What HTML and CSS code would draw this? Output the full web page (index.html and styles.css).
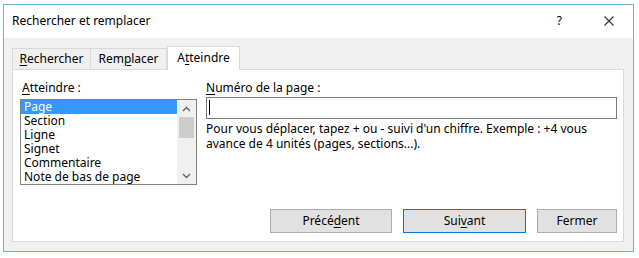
FILE: index.html
```html
<!DOCTYPE html>
<html lang="fr">
<head>
<meta charset="utf-8">
<title>Rechercher et remplacer</title>
<link rel="stylesheet" href="styles.css">
</head>
<body>
<div class="window">
  <div class="titlebar">
    <span class="title">Rechercher et remplacer</span>
    <span class="help">?</span>
    <span class="close"><svg width="10" height="10" viewBox="0 0 10 10"><path d="M0.5 0.5 L9.5 9.5 M9.5 0.5 L0.5 9.5" stroke="#333" stroke-width="1.1" fill="none"/></svg></span>
  </div>
  <div class="body">
    <div class="tabs">
      <div class="tab t1"><u>R</u>echercher</div>
      <div class="tab t2">Rem<u>p</u>lacer</div>
      <div class="tab active">A<u>t</u>teindre</div>
    </div>
    <div class="panel">
      <div class="cols">
        <div class="left">
          <div class="label lbl-left"><u>A</u>tteindre :</div>
          <div class="listbox">
            <ul class="items">
              <li class="sel">Page</li>
              <li>Section</li>
              <li>Ligne</li>
              <li>Signet</li>
              <li>Commentaire</li>
              <li>Note de bas de page</li>
            </ul>
            <div class="scrollbar">
              <div class="arrow up"><svg width="9" height="6" viewBox="0 0 9 6"><path d="M1 5 L4.5 1.5 L8 5" stroke="#606060" stroke-width="1.3" fill="none"/></svg></div>
              <div class="thumb"></div>
              <div class="track"></div>
              <div class="arrow down"><svg width="9" height="6" viewBox="0 0 9 6"><path d="M1 1 L4.5 4.5 L8 1" stroke="#606060" stroke-width="1.3" fill="none"/></svg></div>
            </div>
          </div>
        </div>
        <div class="right">
          <div class="label lbl-right"><u>N</u>uméro de la page :</div>
          <div class="input"><span class="caret"></span></div>
          <p class="desc">Pour vous déplacer, tapez + ou - suivi d'un chiffre. Exemple : +4 vous<br>avance de 4 unités (pages, sections...).</p>
        </div>
      </div>
      <div class="buttons">
        <div class="btn prev">Précé<u>d</u>ent</div>
        <div class="btn next">Sui<u>v</u>ant</div>
        <div class="btn close-btn">Fermer</div>
      </div>
    </div>
  </div>
</div>
</body>
</html>
```
FILE: styles.css
```css
* { box-sizing: border-box; }
html, body { margin: 0; padding: 0; background: #ffffff; }
body {
  font-family: "Noto Sans", "Open Sans", "DejaVu Sans", sans-serif;
  font-size: 12px;
  color: #000;
  width: 639px;
  height: 258px;
  overflow: hidden;
}
u { text-decoration: underline; text-underline-offset: 2px; text-decoration-thickness: 1px; }
.window {
  margin: 4px 0 0 3px;
  width: 631px;
  height: 248px;
  border: 1px solid #6cb2de;
  display: flex;
  flex-direction: column;
  background: #fff;
}
.titlebar {
  height: 33px;
  display: flex;
  align-items: center;
  padding-left: 8px;
  background: #fff;
}
.title { font-size: 12px; line-height: 16px; margin-top: -1px; }
.help { margin-left: auto; font-size: 12px; line-height: 16px; margin-right: 42px; margin-top: -1px; }
.close { width: 10px; height: 10px; margin-right: 19px; display: flex; margin-top: -1px; }
.body {
  flex: 1;
  background: #f0f0f0;
  padding: 8px 9px 9px 8px;
  display: flex;
  flex-direction: column;
}
.tabs {
  display: flex;
  align-items: flex-end;
  height: 23px;
  position: relative;
  z-index: 1;
}
.tab {
  height: 21px;
  border: 1px solid #d9d9d9;
  border-bottom: none;
  background: #f0f0f0;
  line-height: 20px;
  text-align: center;
  color: #000;
}
.t1 { width: 79px; }
.t2 { width: 76px; border-left: none; }
.tab.active {
  height: 24px;
  margin-bottom: -1px;
  width: 73px;
  background: #fff;
  border-left: 1px solid #d9d9d9;
  line-height: 22px;
}
.panel {
  flex: 1;
  background: #fff;
  border: 1px solid #d9d9d9;
  padding: 10px 6px 8px 7px;
  display: flex;
  flex-direction: column;
}
.cols { display: flex; gap: 10px; }
.left { width: 176px; }
.label { line-height: 15px; height: 15px; }
.lbl-left { margin-left: 2px; margin-bottom: 4px; }
.lbl-right { margin-bottom: 2px; }
.listbox {
  width: 177px;
  height: 86px;
  border: 1px solid #828282;
  display: flex;
}
.items {
  list-style: none;
  margin: 0;
  padding: 0;
  flex: 1;
}
.items li {
  height: 14px;
  line-height: 14px;
  padding-left: 3px;
  white-space: nowrap;
}
.items li.sel { background: #3399ff; color: #fff; }
.scrollbar {
  width: 19px;
  background: #f0f0f0;
  display: flex;
  flex-direction: column;
  align-items: center;
}
.arrow { height: 17px; width: 100%; display: flex; align-items: center; justify-content: center; }
.thumb { width: 15px; height: 21px; background: #cdcdcd; }
.track { flex: 1; }
.right { flex: 1; }
.input {
  height: 22px;
  width: 411px;
  border: 1px solid #7a7a7a;
  padding: 2px 0 0 2px;
}
.caret { display: block; width: 1px; height: 15px; background: #000; }
.desc { margin: 2px 0 0 0; line-height: 15px; }
.buttons {
  margin-top: auto;
  display: flex;
  justify-content: flex-end;
  gap: 11px;
}
.btn {
  height: 24px;
  background: #e1e1e1;
  border: 1px solid #adadad;
  text-align: center;
  line-height: 22px;
}
.prev { width: 122px; }
.next { width: 123px; border-color: #0078d7; }
.close-btn { width: 80px; }
```
